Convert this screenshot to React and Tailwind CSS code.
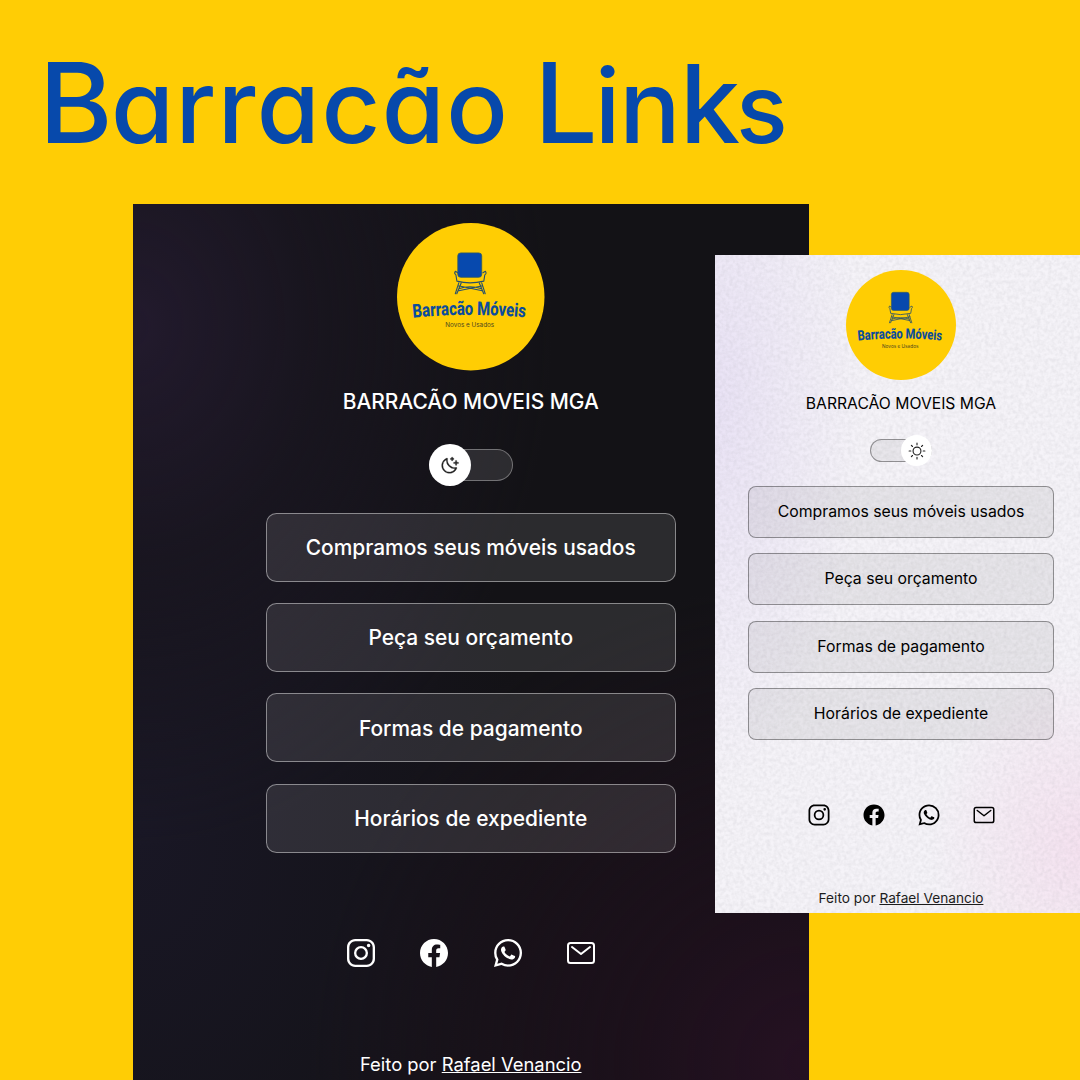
import React from "react";
import { IoLogoInstagram, IoLogoFacebook, IoLogoWhatsapp, IoMailOutline } from "react-icons/io5";
import { PiMoonStars, PiSun } from "react-icons/pi";

const LINKS = [
  "Compramos seus móveis usados",
  "Peça seu orçamento",
  "Formas de pagamento",
  "Horários de expediente",
];

const SOCIALS = [IoLogoInstagram, IoLogoFacebook, IoLogoWhatsapp, IoMailOutline];

const DARK = {
  id: "dark",
  panel:
    "ml-[133px] mt-[203.5px] w-[676px] h-[876.5px] pt-[19.5px] pr-[0.5px] text-white bg-[#131216] bg-[radial-gradient(ellipse_420px_520px_at_0%_14%,#221a2d_0%,#1a1621b0_45%,transparent_100%),radial-gradient(ellipse_500px_480px_at_100%_98%,#251122_0%,#1e101ccc_35%,transparent_100%),radial-gradient(ellipse_400px_550px_at_0%_72%,#191725_0%,transparent_100%)]",
  logo: "size-[147.5px]",
  title: "mt-[13.5px] h-9 leading-9 text-[20.95px] font-medium",
  toggle: "mt-6 w-[84.5px] h-[42px]",
  track: "h-[31.5px] border-[#ffffff55] bg-[#ffffff1c]",
  knob: "size-[42px] left-0 text-[#222]",
  glyph: "size-[21px] stroke-[3px] stroke-current",
  list: "mt-[26.5px] w-[410px] gap-[21.4px]",
  link: "h-[69px] pt-px rounded-[10.5px] border-[#ffffff70] bg-[#ffffff1b] text-[20.95px] font-medium",
  socials: "mt-[84.5px] gap-[41.5px]",
  icon: "size-8",
  footer: "mt-[80.5px] h-7 leading-7 text-[18.4px]",
};

const LIGHT = {
  id: "light",
  panel:
    "absolute left-[715px] top-[255px] w-[364.5px] h-[657.5px] pt-[14.5px] pl-[7.5px] text-black bg-[#f5f3f8] bg-[radial-gradient(ellipse_150px_380px_at_0%_22%,#e9e2f5_0%,transparent_100%),radial-gradient(ellipse_150px_190px_at_100%_90%,#f5e2f0_0%,transparent_100%)]",
  logo: "size-[110px]",
  title: "mt-[12px] h-6 leading-6 text-[15.7px]",
  toggle: "mt-[19.5px] w-[62px] h-[31px]",
  track: "h-[23.5px] border-[#00000060] bg-[#0000000d]",
  knob: "size-[31px] right-0 text-[#222]",
  glyph: "size-[18px]",
  list: "mt-[20px] w-[306px] gap-[15.9px]",
  link: "h-[51.6px] rounded-[8px] border-[#00000060] bg-[#0000000f] text-[15.8px]",
  socials: "mt-[62.5px] gap-[31px]",
  icon: "size-6",
  footer: "mt-[61px] h-5 leading-5 text-[13.7px] text-[#1c1c1c]",
};

function Logo({ className, id }) {
  return (
    <svg viewBox="0 0 148 148" className={`${className} shrink-0`} aria-label="Barracão Móveis">
      <circle cx="74" cy="74" r="74" fill="#ffcd03" />
      <g fill="none" stroke="#28506a" strokeWidth="1.1" strokeLinecap="round" strokeLinejoin="round">
        <path d="M61 50l-2.500-1.500q-1.500 2 .6 3.600l1 6.200q13 3.500 27 0l1-6.200q2.200-1.600 .6-3.600l-2.500 1.500" />
        <path d="M62 60l-3.500 11M64.500 60l-4.500 11M85 60l3.500 11M82.500 60l4.500 11M62 66q11-4 23 0M61.500 63l24 5M86 63l-24 5" />
      </g>
      <rect x="61" y="30" width="24" height="24.500" rx="3" fill="#0749ae" stroke="#315a60" strokeWidth=".8" />
      <path id={`arc-${id}`} d="M16 95Q74 89.500 130 95" fill="none" />
      <text fill="#0b4c9c" fontFamily="Roboto, sans-serif" fontWeight="800" fontSize="19" textLength="113" lengthAdjust="spacingAndGlyphs">
        <textPath href={`#arc-${id}`} textLength="113" lengthAdjust="spacingAndGlyphs">Barracão Móveis</textPath>
      </text>
      <text x="48.500" y="104.800" fill="#4b4420" fontFamily="Inter, sans-serif" fontSize="6.200" textLength="49" lengthAdjust="spacingAndGlyphs">
        Novos e Usados
      </text>
    </svg>
  );
}

// Fine paper-like grain laid over the light theme's background
function Grain() {
  return (
    <svg className="absolute inset-0 size-full opacity-[.13] pointer-events-none" aria-hidden="true">
      <filter id="grain">
        <feTurbulence type="fractalNoise" baseFrequency="0.27" numOctaves="2" seed="4" />
        <feColorMatrix values="0 0 0 0 .35  0 0 0 0 .35  0 0 0 0 .38  1.6 1.6 0 0 -1.2" />
      </filter>
      <rect width="100%" height="100%" filter="url(#grain)" />
    </svg>
  );
}

function Panel({ t }) {
  const Glyph = t.id === "dark" ? PiMoonStars : PiSun;
  return (
    <section className={`${t.panel} overflow-hidden`}>
      {t.id === "light" && <Grain />}
      <div className="relative flex flex-col items-center whitespace-nowrap">
        <Logo className={t.logo} id={t.id} />
        <p className={t.title}>BARRACÃO MOVEIS MGA</p>
        <div className={`${t.toggle} relative flex items-center`}>
          <span className={`${t.track} w-full rounded-full border`} />
          <span className={`${t.knob} absolute top-0 flex items-center justify-center rounded-full bg-white`}>
            <Glyph className={t.glyph} />
          </span>
        </div>
        <ul className={`${t.list} flex flex-col`}>
          {LINKS.map((label) => (
            <li key={label} className={`${t.link} flex items-center justify-center border`}>
              {label}
            </li>
          ))}
        </ul>
        <div className={`${t.socials} flex`}>
          {SOCIALS.map((Icon, i) => (
            <Icon key={i} className={t.icon} />
          ))}
        </div>
        <footer className={t.footer}>
          Feito por <a className="underline">Rafael Venancio</a>
        </footer>
      </div>
    </section>
  );
}

export default function App() {
  return (
    <main className="relative h-[1080px] w-[1080px] overflow-hidden bg-[#ffcd05] font-['Inter',sans-serif]">
      <h1 className="absolute left-[39px] top-[34px] whitespace-pre text-[112px] leading-[136px] font-medium text-[#0749ab] [font-feature-settings:'cv11']">
        <span className="tracking-[-1.5px]">B</span>
        <span className="text-[102px] tracking-[1.5px]">arracão</span>
        <span className="tracking-[-5px]"> </span>
        <span className="tracking-[-3px]">L</span>
        <span className="text-[102px] tracking-[-1px]">in</span>
        <span className="text-[108px] tracking-[-4px]">k</span>
        <span className="text-[96px]">s</span>
      </h1>
      <div className="flex">
        <Panel t={DARK} />
      </div>
      <Panel t={LIGHT} />
    </main>
  );
}
